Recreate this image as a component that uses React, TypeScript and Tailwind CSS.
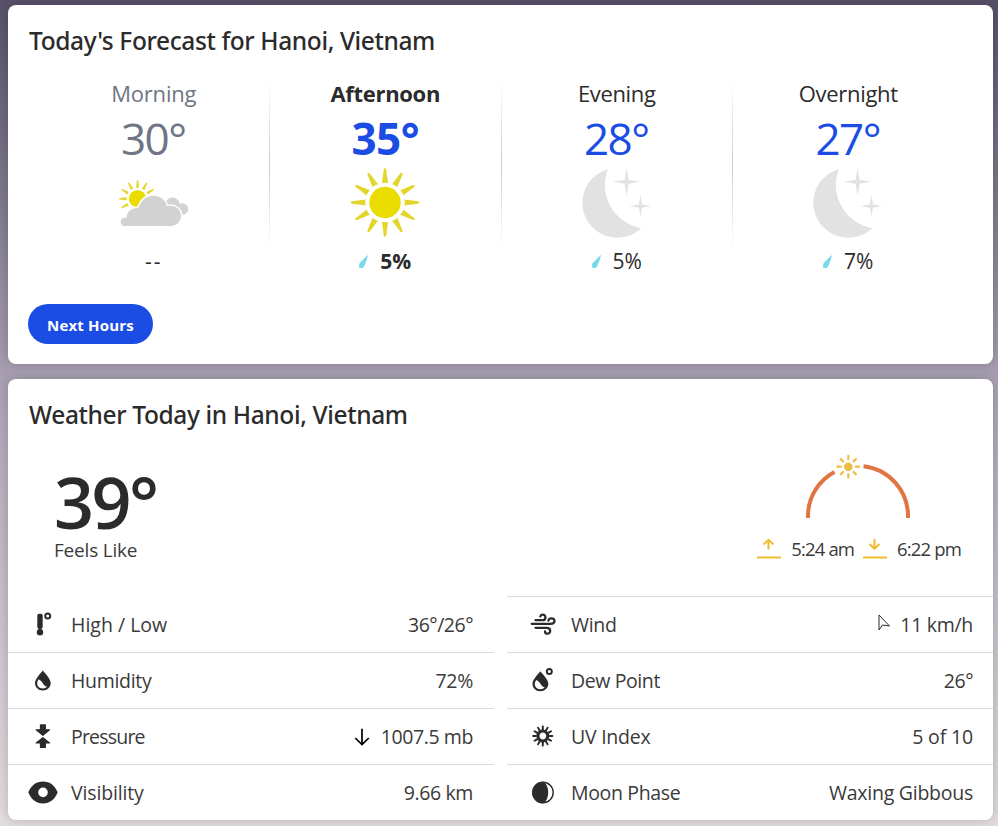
import type { ReactNode } from "react"

type PeriodProps = {
  name: string
  temp: string
  icon: ReactNode
  chance?: string
  nameStyle: string
  tempStyle: string
  chanceStyle: string
}

type DetailProps = {
  label: string
  value: string
  icon: ReactNode
  labelStyle?: string
  valueStyle?: string
  trend?: ReactNode
}

const rayAngles = [0, 30, 60, 90, 120, 150, 180, 210, 240, 270, 300, 330]

const SunIcon = () => (
  <svg className="size-[70px]" viewBox="-35 -34.5 70 70" fill="#ebdc00">
    <circle r="15.7" />
    {rayAngles.map((angle) => (
      <path
        key={angle}
        d="M-3.1-19.3Q0-20.3 3.1-19.3L1.2-33Q0-35.8-1.2-33Z"
        fill="#e2d62b"
        transform={`rotate(${angle})`}
      />
    ))}
  </svg>
)

const PartlyCloudyIcon = () => (
  <svg className="size-[70px]" viewBox="119 168 70 70">
    <g transform="translate(137.6 198.7)" fill="#ebdc00">
      <circle r="8.7" />
      {[-120, -90, -60, -30, 0, 30, 60].map((angle) => (
        <path
          key={angle}
          d="M-1.5-11L1.5-11L.7-18Q0-19.5-.7-18Z"
          fill="#e2d62b"
          transform={`rotate(${angle})`}
        />
      ))}
    </g>
    <g fill="#d2d2d2">
      <circle cx="172.5" cy="205" r="7.4" />
      <circle cx="182.5" cy="209" r="5.8" />
    </g>
    <path
      d="M124.9 226C119.3 226 119.3 217.7 124.9 217.7H126.7C126.7 211.5 131.5 207.7 138.3 207.7C141.2 200 146.8 195.7 153.3 195.7C160 195.7 165.3 199.7 167.2 206.2C174.8 204.3 181 209.3 181 215.8C181 221.7 176.7 226 170.8 226Z"
      fill="#d2d2d2"
      stroke="#fff"
      strokeWidth="3"
      paintOrder="stroke"
    />
  </svg>
)

const NightIcon = () => (
  <svg className="size-[70px]" viewBox="581.5 167.5 70 70" fill="#e2e2e2">
    <path d="M607.3 168.7A34.9 34.9 0 1 0 640.7 227.7A44 44 0 0 1 607.3 168.7Z" />
    <path d="M626.2 167.7Q627.2 173 627.9 179.2Q633 180 640 181.3Q633 182.4 628 183.3Q627.3 189 626.2 195Q625 189 624.2 183.3Q619 182.5 612.3 181.3Q619 180 624.2 179.2Q625 173 626.2 167.7Z" />
    <path d="M640 194.8Q640.8 199.500 641.4 204Q645.500 204.700 650.5 205.7Q645.500 206.600 641.4 207.3Q640.8 211.500 640 216Q639.1 211.500 638.500 207.3Q634 206.600 629 205.7Q634 204.700 638.500 204Q639.1 199.500 640 194.8Z" />
  </svg>
)

const RainIcon = () => (
  <svg className="w-[11px] h-[14px]" viewBox="0.5 0.5 11 14">
    <path d="M9.8.2L2 7.4C.3 9.3.2 10.8.2 12.3C.8 13.6 3.3 14.2 5 12.7C6.4 11 8.4 4.8 9.8.2Z" fill="#78d9ed" />
  </svg>
)

const Icon = ({ children }: { children: ReactNode }) => (
  <svg className="size-[30px] shrink-0" viewBox="0 0 30 30" fill="#2b2b2b">
    {children}
  </svg>
)

const TemperatureIcon = () => (
  <Icon>
    <rect x="9.3" y="3.8" width="5.4" height="15" rx="1.7" />
    <circle cx="12" cy="22.2" r="3.2" />
    <path d="M10.8 17h2.4v4h-2.4z" />
    <circle cx="19.7" cy="5.9" r="2.5" fill="none" stroke="#2b2b2b" strokeWidth="2" />
  </Icon>
)

const HumidityIcon = () => (
  <Icon>
    <path
      fillRule="evenodd"
      d="M14.8 4.5C12.7 7.4 7 12.7 7 17.1C7 21.3 10.3 24.6 14.8 24.6C19.3 24.6 22.7 21.3 22.7 17.1C22.7 12.7 17 7.4 14.8 4.5ZM10.6 13.2C7.4 18 10 22.5 14.8 22.5C16.7 22.5 18.1 21.9 19.3 20.6C17.3 20.4 16.1 19.3 15 17.4C13.9 15.6 12.7 14.4 10.6 13.2Z"
    />
  </Icon>
)

const PressureIcon = () => (
  <Icon>
    <path
      d="M12.5 3h4.8v4.8h4.2l-6.6 5.4l-6.7-5.4h4.3zM12.5 25.4h4.8v-4.5h4.2l-6.6-5.1l-6.7 5.1h4.3z"
      stroke="#2b2b2b"
      strokeWidth="1.3"
      strokeLinejoin="round"
    />
  </Icon>
)

const VisibilityIcon = () => (
  <Icon>
    <path
      fillRule="evenodd"
      d="M.3 14.3C3 7.5 8.3 3.5 15 3.5S27 7.5 29.7 14.3C27 21.5 21.7 25.5 15 25.5S3 21.5.3 14.3ZM15 9.6A4.8 4.8 0 1 0 15 19.2A4.8 4.8 0 1 0 15 9.6Z"
    />
  </Icon>
)

const WindIcon = () => (
  <Icon>
    <g fill="none" stroke="#2b2b2b" strokeWidth="2.3" strokeLinecap="round">
      <path d="M7.5 10.2H14.5C18.5 10.2 18.2 4.7 14.8 4.7C13.4 4.7 12.7 5.3 12.3 6.4" />
      <path d="M3.7 13.8H22.5C28 13.8 27.3 8.3 23.5 8.3C21.8 8.3 20.7 9 20.4 10.5" />
      <path d="M7.5 17.8H18.8C23.5 17.8 22.9 23.7 19.5 23.7C17.7 23.7 16.9 22.7 17 21.5" />
    </g>
  </Icon>
)

const DewPointIcon = () => (
  <Icon>
    <path
      fillRule="evenodd"
      d="M12.3 5.3C10.2 8.2 4.5 13.4 4.5 17.8C4.5 22 7.8 25.3 12.3 25.3C16.8 25.3 20.3 22 20.3 17.8C20.3 13.4 14.5 8.2 12.3 5.3ZM8.2 14C5 18.7 7.6 23.2 12.4 23.2C14.3 23.2 15.7 22.6 16.9 21.3C14.9 21.1 13.7 20 12.6 18.1C11.5 16.3 10.3 15.1 8.2 14Z"
    />
    <circle cx="21.3" cy="5.6" r="2.5" fill="none" stroke="#2b2b2b" strokeWidth="2" />
  </Icon>
)

const UvIcon = () => (
  <Icon>
    <g transform="translate(14.8 14)">
      <circle r="4.9" fill="none" stroke="#2b2b2b" strokeWidth="3" />
      {rayAngles.map((angle) => (
        <path key={angle} d="M-1.1-6L-.9-10Q0-11.3.9-10L1.1-6Z" transform={`rotate(${angle})`} />
      ))}
    </g>
  </Icon>
)

const MoonPhaseIcon = () => (
  <Icon>
    <circle cx="15" cy="14.5" r="10.2" fill="none" stroke="#2b2b2b" strokeWidth="1.4" />
    <path d="M15 3.7C22 6.7 22 22.3 15 25.3A10.8 10.8 0 0 1 15 3.7Z" />
  </Icon>
)

const PressureTrend = () => (
  <svg className="w-4 h-[18px] mr-[11px]" viewBox="0 0 16 18" fill="none" stroke="#000" strokeWidth="1.7">
    <path d="M8 .7V16.5M1.2 10L8 16.5L14.8 10" />
  </svg>
)

const WindDirection = () => (
  <svg className="w-[14px] h-[18px] mr-[9px] mb-1" viewBox="0 0 14 18" fill="none" stroke="#2b2b2b" strokeWidth="1">
    <path d="M2 1V16L5.5 11L12.5 12Z" />
  </svg>
)

const periods: PeriodProps[] = [
  {
    name: "Morning",
    temp: "30°",
    icon: <PartlyCloudyIcon />,
    nameStyle: "text-[#6f7585] tracking-[-0.2px]",
    tempStyle: "text-[#6f7585] tracking-[-1.5px] pr-px",
    chanceStyle: "",
  },
  {
    name: "Afternoon",
    temp: "35°",
    icon: <SunIcon />,
    chance: "5%",
    nameStyle: "font-bold tracking-[-0.3px]",
    tempStyle: "font-bold text-[#1b4de4] tracking-[-0.5px]",
    chanceStyle: "font-bold",
  },
  {
    name: "Evening",
    temp: "28°",
    icon: <NightIcon />,
    chance: "5%",
    nameStyle: "tracking-[-0.35px]",
    tempStyle: "text-[#1b4de4] tracking-[-1.5px] pr-px",
    chanceStyle: "",
  },
  {
    name: "Overnight",
    temp: "27°",
    icon: <NightIcon />,
    chance: "7%",
    nameStyle: "tracking-[-0.3px]",
    tempStyle: "text-[#1b4de4] tracking-[-1.5px] pr-px",
    chanceStyle: "",
  },
]

const leftDetails: DetailProps[] = [
  {
    label: "High / Low",
    value: "36°/26°",
    icon: <TemperatureIcon />,
    valueStyle: "tracking-[-0.5px]",
  },
  {
    label: "Humidity",
    value: "72%",
    icon: <HumidityIcon />,
    labelStyle: "tracking-[-0.3px]",
    valueStyle: "tracking-[-0.3px]",
  },
  {
    label: "Pressure",
    value: "1007.5 mb",
    icon: <PressureIcon />,
    trend: <PressureTrend />,
    labelStyle: "tracking-[-0.8px]",
    valueStyle: "tracking-[-0.4px]",
  },
  {
    label: "Visibility",
    value: "9.66 km",
    icon: <VisibilityIcon />,
    labelStyle: "tracking-[-0.15px]",
    valueStyle: "tracking-[-0.4px]",
  },
]

const rightDetails: DetailProps[] = [
  {
    label: "Wind",
    value: "11 km/h",
    icon: <WindIcon />,
    trend: <WindDirection />,
    labelStyle: "tracking-[-0.3px]",
    valueStyle: "tracking-[-0.3px]",
  },
  {
    label: "Dew Point",
    value: "26°",
    icon: <DewPointIcon />,
    labelStyle: "tracking-[-0.4px]",
    valueStyle: "tracking-[-0.5px]",
  },
  {
    label: "UV Index",
    value: "5 of 10",
    icon: <UvIcon />,
    labelStyle: "tracking-[-0.25px]",
    valueStyle: "tracking-[-0.15px]",
  },
  {
    label: "Moon Phase",
    value: "Waxing Gibbous",
    icon: <MoonPhaseIcon />,
    labelStyle: "tracking-[-0.35px]",
    valueStyle: "tracking-[-0.25px]",
  },
]

const Period = ({ name, temp, icon, chance, nameStyle, tempStyle, chanceStyle }: PeriodProps) => (
  <li className="flex-1 flex flex-col items-center">
    <h3 className={`h-[29px] text-[22px] leading-[28px] whitespace-nowrap ${nameStyle}`}>{name}</h3>
    <span className={`h-[60px] text-[44px] leading-[60px] whitespace-nowrap ${tempStyle}`}>{temp}</span>
    {icon}
    <div className={`flex items-center gap-[10px] h-12 text-[21px] ${chanceStyle}`}>
      {chance ? (
        <>
          <RainIcon />
          <span>{chance}</span>
        </>
      ) : (
        <span className="tracking-[2px]">--</span>
      )}
    </div>
  </li>
)

const Divider = () => (
  <li className="w-px h-[172px] -mx-[0.5px] bg-linear-to-b from-white via-[#cccccc] to-white" />
)

const Detail = ({ label, value, icon, labelStyle = "", valueStyle = "", trend }: DetailProps) => (
  <li className="flex items-center h-14 pl-5 pr-[21px] text-[19.5px] text-[#3a3a3a] border-b border-[#dadbdd] last:border-transparent">
    {icon}
    <span className={`ml-[13px] pt-px flex-1 whitespace-nowrap ${labelStyle}`}>{label}</span>
    {trend}
    <span className={`pt-px whitespace-nowrap ${valueStyle}`}>{value}</span>
  </li>
)

const SunPath = () => (
  <svg className="w-[110px] h-[66px]" viewBox="804 453 110 66" fill="none">
    <g stroke="#df7642" strokeWidth="4">
      <path d="M808 518V516A50 50 0 0 1 834.5 471.9" />
      <path d="M863.5 466.2A50 50 0 0 1 908 516V518" />
    </g>
    <g transform="translate(848.3 466.7)" stroke="#efbd3e" strokeWidth="2.2" strokeLinecap="round">
      <circle r="4.3" fill="#efbd3e" stroke="none" />
      {[0, 45, 90, 135, 180, 225, 270, 315].map((angle) => (
        <path key={angle} d="M0-7.5V-10.8" transform={`rotate(${angle})`} />
      ))}
    </g>
  </svg>
)

const HorizonIcon = ({ arrow }: { arrow: string }) => (
  <svg className="w-6 h-[22px]" viewBox="0 0 24 22" fill="none" stroke="#efbd2f" strokeWidth="2">
    <path d="M0 19.5H24" />
    <path d={arrow} />
  </svg>
)

export default function App() {
  return (
    <main className="w-[998px] h-[826px] overflow-hidden pl-2 pr-[5px] pt-[5px] flex flex-col gap-[15px] bg-linear-to-b from-[#575069] via-[#b0a8b9] to-[#e3dde0] font-['Open_Sans','Noto_Sans',sans-serif] text-[#2b2b2b]">
      <section className="h-[359px] shrink-0 bg-white rounded-[8px] shadow-[0_0_12px_rgba(0,0,0,0.2)]">
        <h2 className="pt-[19px] pl-[21px] text-[24.5px] leading-[34px] font-['Noto_Sans',sans-serif] font-medium tracking-[-0.39px] whitespace-nowrap">
          Today's Forecast for Hanoi, Vietnam
        </h2>
        <ul className="flex ml-[30px] w-[926px] mt-[21px]">
          <Period {...periods[0]} />
          <Divider />
          <Period {...periods[1]} />
          <Divider />
          <Period {...periods[2]} />
          <Divider />
          <Period {...periods[3]} />
        </ul>
        <button className="mt-[18px] ml-5 w-[125px] h-10 pt-0.5 rounded-full bg-[#1b4de4] text-white text-[15px] font-bold tracking-[0.2px] whitespace-nowrap">
          Next Hours
        </button>
      </section>

      <section className="h-[441px] shrink-0 bg-white rounded-[8px] shadow-[0_0_12px_rgba(0,0,0,0.2)]">
        <h2 className="pt-[19px] pl-[21px] text-[24.5px] leading-[34px] font-['Noto_Sans',sans-serif] font-medium tracking-[-0.37px] whitespace-nowrap">
          Weather Today in Hanoi, Vietnam
        </h2>
        <div className="flex justify-between h-[164px] pt-[21px] pl-[46px] pr-8">
          <div className="pt-[1px]">
            <div className="h-[95px] text-[70px] leading-[96px] font-semibold tracking-[-2.5px]">39°</div>
            <div className="h-[26px] -mt-3 text-[19px] leading-[26px] text-[#3a3a3a] tracking-[-0.2px] whitespace-nowrap">
              Feels Like
            </div>
          </div>
          <div className="flex flex-col items-center">
            <SunPath />
            <div className="mt-[18px] flex items-center text-[18.5px] leading-6 text-[#3a3a3a] tracking-[-0.85px]">
              <HorizonIcon arrow="M11.5 11.5V2M6.5 6.5L11.5 1.8L16.5 6.5" />
              <span className="ml-[10px] mr-[9px] whitespace-nowrap">5:24 am</span>
              <HorizonIcon arrow="M11.5 1V10.5M6.5 6L11.5 10.8L16.5 6" />
              <span className="ml-[10px] whitespace-nowrap">6:22 pm</span>
            </div>
          </div>
        </div>
        <div className="grid grid-cols-[486px_486px] gap-[13px]">
          <ul className="pt-px">
            {leftDetails.map((detail) => (
              <Detail key={detail.label} {...detail} />
            ))}
          </ul>
          <ul className="border-t border-[#dadbdd] [&>li]:pl-[21px] [&>li]:pr-5">
            {rightDetails.map((detail) => (
              <Detail key={detail.label} {...detail} />
            ))}
          </ul>
        </div>
      </section>
    </main>
  )
}
